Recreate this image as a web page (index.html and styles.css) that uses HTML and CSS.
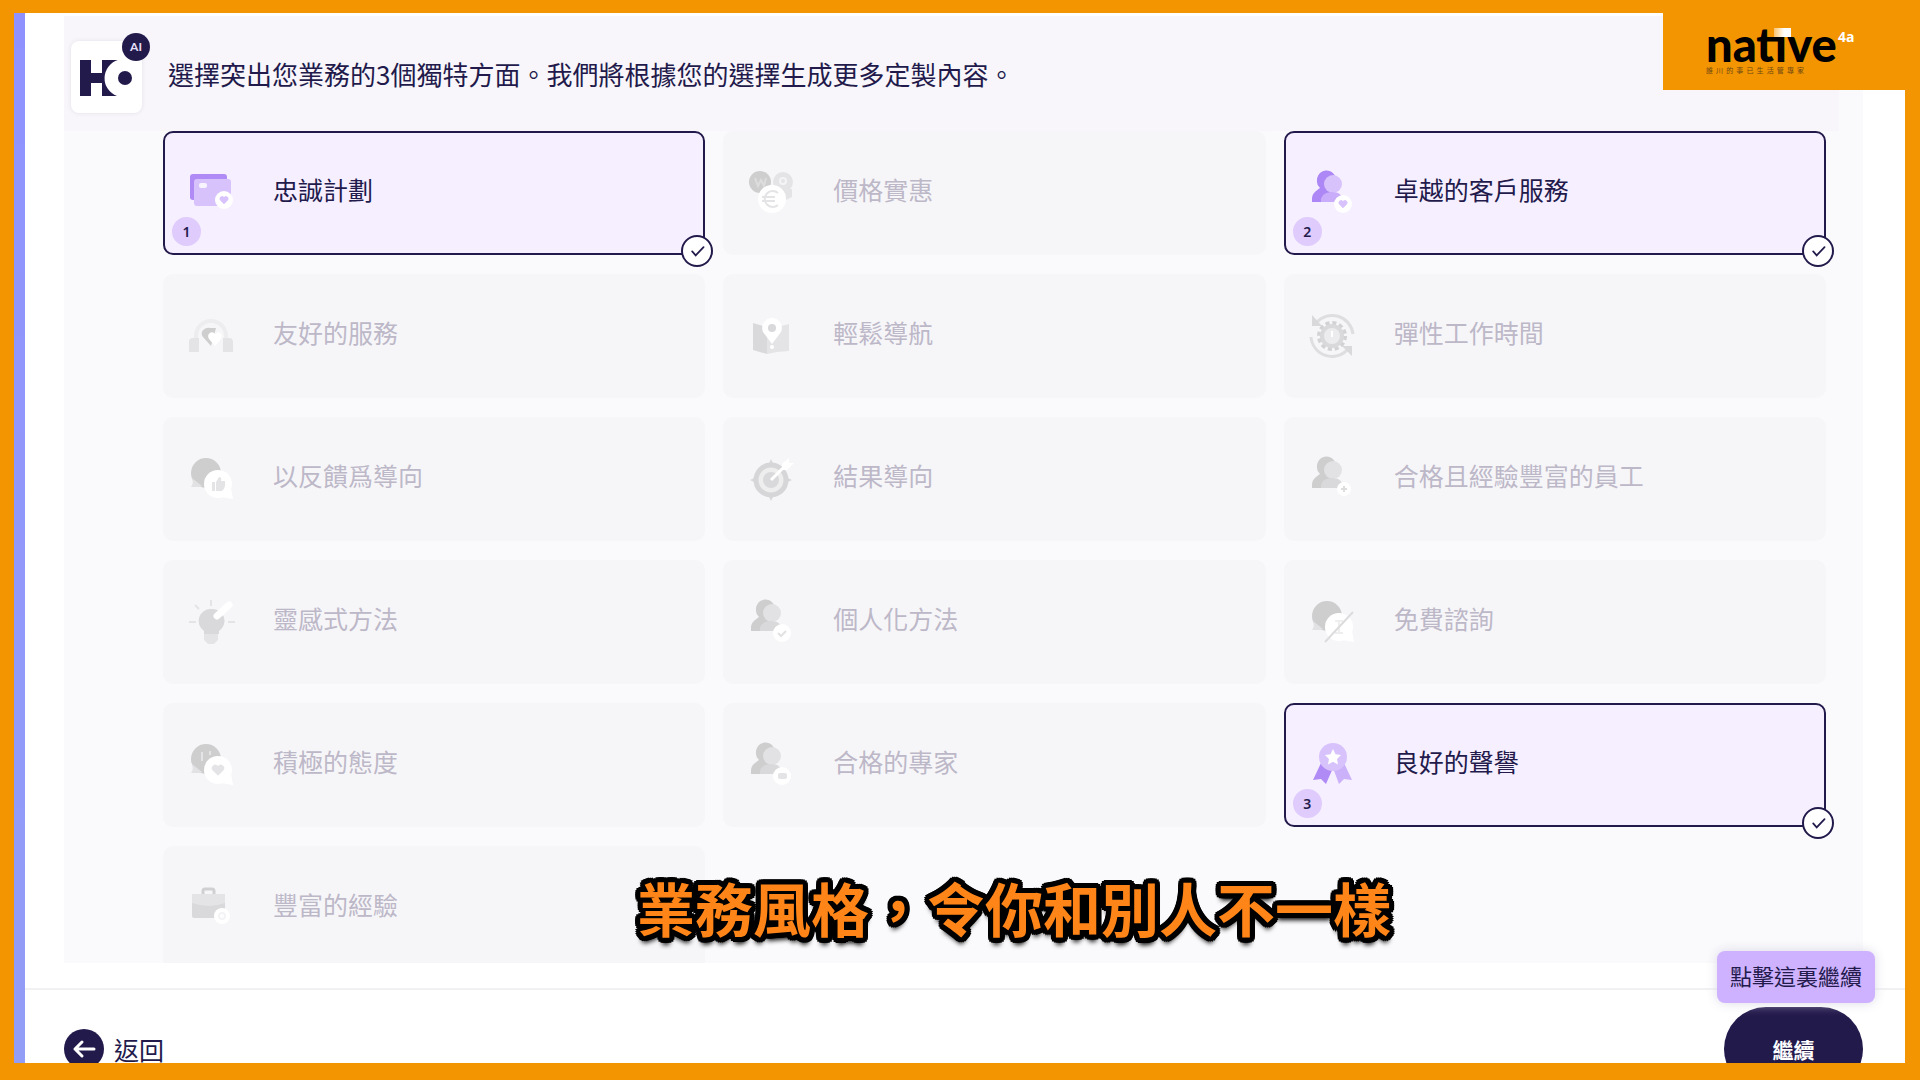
FILE: index.html
```html
<!DOCTYPE html>
<html lang="zh-Hant">
<head>
<meta charset="utf-8">
<meta name="viewport" content="width=device-width, initial-scale=1">
<title>選擇業務特色</title>
<link rel="stylesheet" href="styles.css">
</head>
<body>
<svg class="defs" aria-hidden="true">
  <symbol id="heart" viewBox="0 0 12 12"><path d="M6 11 1.3 6.2A2.9 2.9 0 0 1 6 2.6a2.9 2.9 0 0 1 4.7 3.6z"/></symbol>
  <symbol id="people" viewBox="0 0 48 48">
    <path class="dark" d="M9 13a9.500 9.500 0 1 1 16 7v15H4v-3c0-6 4-8 8-11a9 9 0 0 1-3-8z"/>
    <circle class="mid" cx="25" cy="17" r="9"/>
    <path class="light" d="M13 35c-1-6 4-10 11-10s11 3 11 10z"/>
  </symbol>
  <symbol id="chat" viewBox="0 0 48 48">
    <circle class="dark" cx="19" cy="20" r="15"/>
    <path class="mid" d="m5 25 10 8-2 1H4q3-4 1-9z"/>
    <circle class="white" cx="31" cy="31" r="14"/>
    <path class="white" d="m44 35 2 11-12-2z"/>
  </symbol>
  <symbol id="tick" viewBox="0 0 32 32"><path d="m10.500 16.500 4 4.500 9-9.500" fill="none" stroke="#231a4c" stroke-width="2" stroke-linecap="round"/></symbol>
</svg>
<div class="frame">
  <div class="rail"></div>
  <div class="page">
    <main class="panel">
      <header class="intro">
        <div class="avatar">
          <svg viewBox="0 0 70 72" role="img" aria-label="HO">
            <path fill="#231a4c" d="M9 19h11v13h11V19h16a19 19 0 0 0-1 36H31V42H20v13H9z"/>
            <circle cx="54" cy="37" r="19" fill="#fff"/>
            <circle cx="54" cy="37" r="7" fill="#231a4c"/>
          </svg>
          <span class="ai">AI</span>
        </div>
        <h1>選擇突出您業務的3個獨特方面。我們將根據您的選擇生成更多定製內容。</h1>
      </header>
      <form class="options">
        <label class="option selected"><input type="checkbox" checked>
          <svg class="icon" viewBox="0 0 48 48"><rect class="dark" x="3" y="7" width="37" height="26" rx="3"/><rect class="light" x="7" y="12" width="37" height="27" rx="3"/><rect class="white" x="12" y="16" width="8" height="5" rx="2" opacity=".8"/><circle class="white" cx="37" cy="33" r="9"/><use class="light" href="#heart" x="32" y="28" width="10" height="10"/></svg>
          <span>忠誠計劃</span><b class="order">1</b><svg class="check" viewBox="0 0 32 32"><use href="#tick"/></svg></label>
        <label class="option"><input type="checkbox">
          <svg class="icon" viewBox="0 0 48 48"><circle class="dark" cx="13" cy="15" r="11"/><path class="line" d="m8 11 3 8 3-6 3 6 2-8" stroke="#ddd"/><circle class="light" cx="36" cy="15" r="10"/><circle cx="36" cy="14" r="3" class="ring"/><path class="light" d="M33 22h12v8l-8 4z"/><circle class="white" cx="25" cy="32" r="14"/><path class="line" d="M31 26a8 8 0 1 0 0 12M15 30h13M15 34h13" stroke="#e4e4e6"/></svg>
          <span>價格實惠</span></label>
        <label class="option selected"><input type="checkbox" checked>
          <svg class="icon" viewBox="0 0 48 48"><use href="#people"/><circle class="white" cx="35" cy="37" r="9"/><use class="light" href="#heart" x="30" y="32" width="10" height="10"/></svg>
          <span>卓越的客戶服務</span><b class="order">2</b><svg class="check" viewBox="0 0 32 32"><use href="#tick"/></svg></label>

        <label class="option"><input type="checkbox">
          <svg class="icon" viewBox="0 0 48 48"><path d="M9 34V26a15 15 0 0 1 30 0v8" fill="none" stroke="#ededef" stroke-width="4"/><path class="light" d="M2 32q0-4 4-4h6v14H2zm34-4h6q4 0 4 4v10H36z"/><path class="dark" d="m24 36-8-9c-4-5 2-10 7-9h6z"/><path class="white" d="m28 36-6-7c-3-5 3-9 6-5 4-4 9 0 6 5z"/></svg>
          <span>友好的服務</span></label>
        <label class="option"><input type="checkbox">
          <svg class="icon" viewBox="0 0 48 48"><path class="mid" d="m6 13 14 4v27L6 40z"/><path class="light" d="m20 17 10 2v23l-10 2zM30 17l12-3v27l-12 1z"/><path class="white" d="M25 8a10 10 0 0 1 9 14l-9 12-9-12a10 10 0 0 1 9-14z"/><circle class="mid" cx="25" cy="18" r="4"/><circle class="white" cx="25" cy="37" r="2"/></svg>
          <span>輕鬆導航</span></label>
        <label class="option"><input type="checkbox">
          <svg class="icon" viewBox="0 0 48 48"><path d="M8 13a21 21 0 0 1 37 11M40 39A21 21 0 0 1 3 27" fill="none" stroke="#dedee0" stroke-width="3"/><path class="mid" d="M4 5v11h10zM44 46V36H34z"/><circle cx="24" cy="26" r="13" fill="none" stroke="#d2d2d4" stroke-width="4" stroke-dasharray="4 2.800"/><circle class="mid" cx="24" cy="26" r="12"/><circle cx="24" cy="26" r="8" fill="#ececee"/><path class="line" d="M24 21v6" stroke="#fff"/></svg>
          <span>彈性工作時間</span></label>

        <label class="option"><input type="checkbox">
          <svg class="icon" viewBox="0 0 48 48"><use href="#chat"/><path class="light" d="M25 29h3v9h-3zM29 29l3-5q3 0 2 4h4q1 7-3 10h-6z"/></svg>
          <span>以反饋爲導向</span></label>
        <label class="option"><input type="checkbox">
          <svg class="icon" viewBox="0 0 48 48"><path class="mid" d="m24 6 3 6h-6zM24 48l3-6h-6zM3 27l6-3v6zM45 27l-6-3v6z"/><circle cx="24" cy="27" r="15" fill="#eee" stroke="#d6d6d8" stroke-width="5"/><circle class="mid" cx="24" cy="27" r="8"/><path d="M24 27 38 13" stroke="#fff" stroke-width="3"/><path class="white" d="m35 11 7-6v5h5l-7 7h-5z"/></svg>
          <span>結果導向</span></label>
        <label class="option"><input type="checkbox">
          <svg class="icon" viewBox="0 0 48 48"><use href="#people"/><circle class="white" cx="36" cy="36" r="7"/><path class="line" d="M36 33v6M33 36h6" stroke="#ddd"/></svg>
          <span>合格且經驗豐富的員工</span></label>

        <label class="option"><input type="checkbox">
          <svg class="icon" viewBox="0 0 48 48"><path class="line" d="M24 4v6M2 26h7M41 26h7M8 9l4 4" stroke="#e4e4e6"/><path class="mid" d="M24 13a12 12 0 0 1 8 22v3H17v-3a12 12 0 0 1 7-22z"/><path class="light" d="M17 38h14v6l-4 4h-6l-4-4z"/><path d="M30 20 42 9" stroke="#fff" stroke-width="7" stroke-linecap="round"/></svg>
          <span>靈感式方法</span></label>
        <label class="option"><input type="checkbox">
          <svg class="icon" viewBox="0 0 48 48"><use href="#people"/><circle class="white" cx="35" cy="37" r="9"/><path class="line" d="m31 37 3 3 5-5" stroke="#e2e2e4"/></svg>
          <span>個人化方法</span></label>
        <label class="option"><input type="checkbox">
          <svg class="icon" viewBox="0 0 48 48"><use href="#chat"/><path class="line" d="M27 25h8M27 37h8M31 25v12" stroke="#eee"/><path d="M17 46 45 16" stroke="#dcdcde" stroke-width="2"/></svg>
          <span>免費諮詢</span></label>

        <label class="option"><input type="checkbox">
          <svg class="icon" viewBox="0 0 48 48"><use href="#chat"/><path class="line" d="M15 13v9M23 12v4" stroke="#e4e4e6"/><use class="light" href="#heart" x="24" y="24" width="14" height="14"/></svg>
          <span>積極的態度</span></label>
        <label class="option"><input type="checkbox">
          <svg class="icon" viewBox="0 0 48 48"><use href="#people"/><circle class="white" cx="35" cy="37" r="9"/><rect class="light" x="31" y="34" width="9" height="6" rx="2"/></svg>
          <span>合格的專家</span></label>
        <label class="option selected"><input type="checkbox" checked>
          <svg class="icon" viewBox="0 0 48 48"><path class="dark" d="m13 24-8 17 8-1 5 5 7-16z"/><path class="mid" d="m36 24 8 17-8-1-5 5-6-16z"/><circle class="light" cx="25" cy="18" r="14"/><path class="white" d="m25 10 2.500 5.200 5.500.8-4 3.900 1 5.600-5-2.700-5 2.700 1-5.600-4-3.900 5.500-.8z"/></svg>
          <span>良好的聲譽</span><b class="order">3</b><svg class="check" viewBox="0 0 32 32"><use href="#tick"/></svg></label>

        <label class="option"><input type="checkbox">
          <svg class="icon" viewBox="0 0 48 48"><path d="M16 12V9q0-2 2-2h7q2 0 2 2v3" fill="none" stroke="#d0d0d2" stroke-width="3"/><rect class="mid" x="5" y="12" width="33" height="24" rx="2"/><path class="light" d="M5 12h33v9q-16 6-33 0z"/><circle class="white" cx="35" cy="34" r="8"/><circle class="ring" cx="35" cy="34" r="3"/></svg>
          <span>豐富的經驗</span></label>
      </form>
    </main>
    <footer class="actions">
      <button class="back" type="button"><svg viewBox="0 0 40 40" aria-hidden="true"><circle cx="20" cy="20" r="20" fill="#231a4c"/><path d="M30 20H11m7-7-7 7 7 7" fill="none" stroke="#fff" stroke-width="3" stroke-linecap="round" stroke-linejoin="round"/></svg>返回</button>
      <div class="next">
        <span class="hint" role="tooltip">點擊這裏繼續</span>
        <button class="continue" type="button">繼續</button>
      </div>
    </footer>
  </div>
  <div class="brand">
    <div class="wordmark"><span class="flag"></span>natıve<sup>4a</sup></div>
    <div class="tagline"><i>誰</i><i>川</i><i>的</i><i>事</i><i>已</i><i>生</i><i>活</i><i>管</i><i>專</i><i>家</i></div>
  </div>
  <p class="caption">業務風格，令你和別人不一樣</p>
</div>
</body>
</html>
```
FILE: styles.css
```css
* { box-sizing: border-box; }
body {
  margin: 0;
  color: #231a4c;
  font-family: "Noto Sans CJK TC", sans-serif;
}
button { border: 0; color: inherit; font: inherit; cursor: pointer; }
.defs { position: absolute; width: 0; height: 0; }

.frame {
  position: relative;
  display: flex;
  height: 100vh;
  overflow: hidden;
  border: solid #f39500;
  border-width: 13px 15px 17px 14px;
  background: #fff;
}
.rail { flex: none; width: 11px; background: linear-gradient(#8f92fe, #929df6); }
.page { flex: 1; display: flex; flex-direction: column; min-width: 0; overflow: hidden; }

.panel {
  flex: 1;
  min-height: 0;
  margin: 3px 42px 25px 39px;
  overflow: hidden;
  background: #fafafc;
}
.intro {
  display: flex;
  align-items: center;
  gap: 26px;
  height: 115px;
  margin-right: 24px;
  padding: 6px 0 0 7px;
  background: #f8f6fa;
}
.avatar {
  position: relative;
  width: 71px;
  height: 72px;
  border-radius: 8px;
  background: #fff;
  box-shadow: 0 0 4px #e2dfe9;
}
.avatar svg { display: block; width: 70px; height: 72px; }
.ai {
  position: absolute;
  top: -8px;
  right: -8px;
  width: 28px;
  border-radius: 50%;
  background: #231a4c;
  color: #e4dff5;
  font: 700 12px/28px Lato, sans-serif;
  text-align: center;
}
h1 { margin: 0; padding-bottom: 6px; font-size: 26px; font-weight: 400; line-height: 36px; }

.options {
  display: grid;
  grid-template-columns: repeat(3, 1fr);
  grid-auto-rows: 124px;
  gap: 19px 18px;
  padding: 0 37px 0 99px;
}
.option {
  position: relative;
  display: flex;
  align-items: center;
  gap: 38px;
  padding: 0 22px 4px;
  border: 2px solid #f6f6f9;
  border-radius: 10px;
  background: #f6f6f9;
  color: #bdb8c8;
  font-size: 25px;
  line-height: 36px;
}
.option > span { padding-bottom: 4px; }
.option input { position: absolute; opacity: 0; }
.selected { border-color: #231a4c; background: #f6efff; color: #231a4c; }
.icon { flex: none; width: 48px; height: 48px; }
.dark { fill: #cececf; }
.mid { fill: #d9d9db; }
.light { fill: #e4e4e6; }
.white { fill: #fff; }
.line { fill: none; stroke-width: 2; }
.ring { fill: none; stroke: #f4f4f6; stroke-width: 2; }
.selected .dark { fill: #b08bf6; }
.selected .mid { fill: #cbb0fa; }
.selected .light { fill: #d8c2fc; }

/* Symbol contents follow the colours of the card that uses them. */
.selected use { --dark: #ac87f5; --mid: #d8c2fc; --light: #c9acfa; }
symbol .dark { fill: var(--dark, #cececf); }
symbol .mid { fill: var(--mid, #e2e2e4); }
symbol .light { fill: var(--light, #d9d9db); }

.order {
  position: absolute;
  bottom: 7px;
  left: 7px;
  width: 29px;
  border-radius: 50%;
  background: #dfcbfc;
  font: 600 14px/29px "Noto Sans", sans-serif;
  text-align: center;
}
.check {
  position: absolute;
  right: -10px;
  bottom: -14px;
  width: 32px;
  height: 32px;
  border: 2px solid #231a4c;
  border-radius: 50%;
  background: #fff;
}

.actions {
  flex: none;
  display: flex;
  align-items: flex-start;
  justify-content: space-between;
  height: 75px;
  padding: 17px 42px 0 39px;
  border-top: 2px solid #f1f1f3;
}
.back {
  display: flex;
  align-items: center;
  gap: 10px;
  height: 84px;
  padding: 0;
  background: none;
  font-size: 25px;
}
.back svg { width: 40px; height: 40px; }
.next { position: relative; }
.continue {
  width: 139px;
  height: 84px;
  border-radius: 42px;
  background: #231a4c;
  color: #fff;
  font-size: 21px;
  font-weight: 700;
}
.hint {
  position: absolute;
  right: -12px;
  bottom: calc(100% + 4px);
  padding: 0 13px 4px;
  border-radius: 8px;
  background: #ceb2ff;
  box-shadow: 0 0 12px #dcd9e6;
  font-size: 22px;
  line-height: 48px;
  white-space: nowrap;
}

.brand {
  position: absolute;
  top: -13px;
  right: -15px;
  width: 257px;
  height: 90px;
  padding: 21px 0 0 43px;
  background: #f39500;
  color: #000;
}
.wordmark { position: relative; font: 900 47px/46px Lato, sans-serif; white-space: nowrap; }
.wordmark sup {
  position: absolute;
  top: 8px;
  left: 132px;
  color: #fff;
  font: 700 14px/16px "Open Sans", sans-serif;
}
.flag {
  position: absolute;
  top: 7px;
  left: 68px;
  width: 17px;
  height: 9px;
  background: linear-gradient(90deg, #f9c46e, #fff 60%);
}
.tagline {
  display: flex;
  justify-content: space-between;
  width: 98px;
  color: #6b4715;
  font-size: 7px;
  line-height: 6px;
}
.tagline i { font-style: normal; }

.caption {
  position: absolute;
  right: 0;
  bottom: 114px;
  left: 109px;
  margin: 0;
  color: #ff8519;
  font-size: 58px;
  font-weight: 700;
  line-height: 84px;
  text-align: center;
  /* a ring of hard shadows gives the outline its round corners */
  text-shadow:
    5px 0 #000, -5px 0 #000, 0 5px #000, 0 -5px #000,
    4px 4px #000, -4px 4px #000, 4px -4px #000, -4px -4px #000,
    5px 2px #000, -5px 2px #000, 5px -2px #000, -5px -2px #000,
    2px 5px #000, -2px 5px #000, 2px -5px #000, -2px -5px #000,
    0 7px 5px #000;
}
```
